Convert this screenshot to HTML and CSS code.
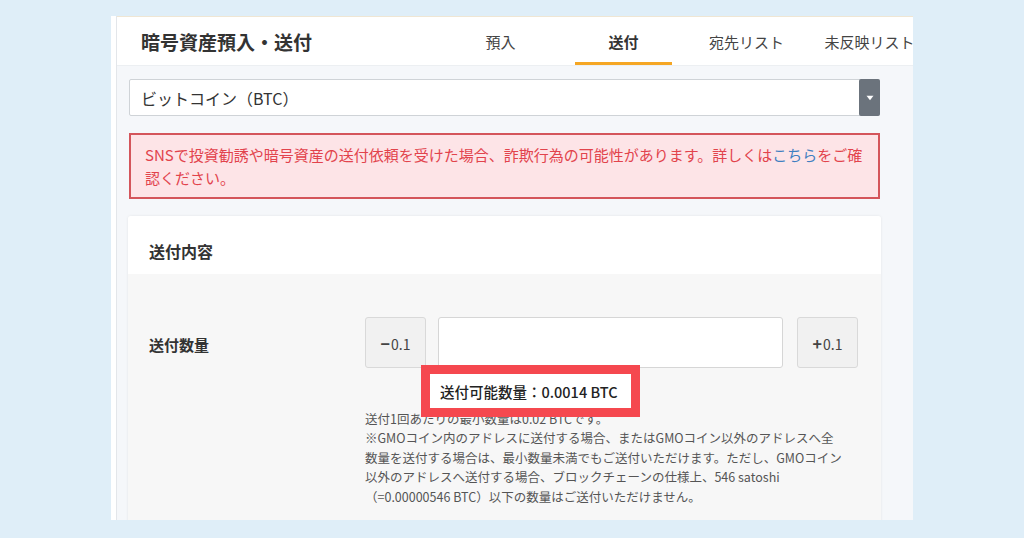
FILE: index.html
```html
<!DOCTYPE html>
<html lang="ja">
<head>
<meta charset="utf-8">
<title>暗号資産預入・送付</title>
<link rel="stylesheet" href="styles.css">
</head>
<body>
<div class="page">
  <div class="panel">
    <div class="inner">
      <header class="header">
        <h1 class="title">暗号資産預入・送付</h1>
        <nav class="tabs">
          <span class="tab">預入</span>
          <span class="tab active">送付</span>
          <span class="tab">宛先リスト</span>
          <span class="tab">未反映リスト</span>
        </nav>
      </header>
      <main class="body">
        <div class="select">
          <span class="select-text">ビットコイン（BTC）</span>
          <span class="select-arrow"><svg width="8" height="6" viewBox="0 0 8 6"><path d="M0.5 0.8h7L4 5.2z" fill="#fff"/></svg></span>
        </div>
        <div class="alert">SNSで投資勧誘や暗号資産の送付依頼を受けた場合、詐欺行為の可能性があります。詳しくは<a class="link">こちら</a>をご確認ください。</div>
        <section class="card">
          <div class="card-head">送付内容</div>
          <div class="card-body">
            <div class="field">
              <div class="label">送付数量</div>
              <div class="controls">
                <div class="stepper">
                  <button class="step"><b class="sign">−</b>0.1</button>
                  <input class="amount" type="text">
                  <button class="step plus"><b class="sign">+</b>0.1</button>
                </div>
                <div class="callout">送付可能数量：0.0014 BTC</div>
                <p class="note">送付1回あたりの最小数量は0.02 BTCです。<br>※GMOコイン内のアドレスに送付する場合、またはGMOコイン以外のアドレスへ全<br>数量を送付する場合は、最小数量未満でもご送付いただけます。ただし、GMOコイン<br>以外のアドレスへ送付する場合、ブロックチェーンの仕様上、546 satoshi<br>（=0.00000546 BTC）以下の数量はご送付いただけません。</p>
              </div>
            </div>
          </div>
        </section>
      </main>
    </div>
  </div>
</div>
</body>
</html>
```
FILE: styles.css
```css
* { box-sizing: border-box; }
html, body { margin: 0; padding: 0; }
body {
  background: #dfeef8;
  font-family: "Noto Sans CJK JP", "Noto Sans", sans-serif;
  color: #333;
  width: 1024px;
  height: 538px;
  overflow: hidden;
}
.page {
  padding: 16px 0 0 111px;
}
.panel {
  width: 802px;
  height: 504px;
  overflow: hidden;
  background: #fff;
  border-left: 5px solid #fff;
}
.inner {
  height: 100%;
  border-left: 1px solid #e3e6ea;
  background: #f5f7fa;
}
.header {
  height: 50px;
  display: flex;
  align-items: stretch;
  background: #fff;
  border-top: 1px solid #efe6d4;
  border-bottom: 1px solid #eceff2;
  padding-left: 24px;
}
.title {
  margin: 0;
  width: 311px;
  flex: 0 0 auto;
  font-size: 19px;
  font-weight: 700;
  color: #333;
  display: flex;
  align-items: center;
  white-space: nowrap;
}
.tabs {
  display: flex;
  gap: 26px;
  white-space: nowrap;
}
.tab {
  width: 97px;
  flex: 0 0 auto;
  display: flex;
  align-items: center;
  justify-content: center;
  font-size: 15px;
  color: #444;
}
.tab.active {
  font-weight: 700;
  color: #333;
  box-shadow: inset 0 -3px 0 #f5a623;
}
.body {
  padding: 13px 33px 0 12px;
}
.select {
  height: 37px;
  display: flex;
  align-items: center;
  background: #fff;
  border: 1px solid #cfd3d7;
  border-radius: 2px;
  padding-left: 11px;
}
.select-text {
  flex: 1;
  font-size: 16px;
  color: #333;
}
.select-arrow {
  width: 21px;
  height: 37px;
  margin-right: -1px;
  background: #6b737c;
  border-radius: 2px;
  display: flex;
  align-items: center;
  justify-content: center;
}
.alert {
  margin-top: 17px;
  height: 66px;
  border: 2px solid #d4555b;
  background: #fde4e7;
  color: #e2434c;
  font-size: 15px;
  line-height: 23px;
  padding: 8px 14px;
}
.link { color: #3f7fc1; }
.card {
  margin: 17px -1px 0 -1px;
  background: #f7f7f7;
  box-shadow: 0 0 3px rgba(0,0,0,0.08);
  border-radius: 3px;
  overflow: hidden;
}
.card-head {
  background: #fff;
  padding: 23px 21px 11px;
  font-size: 16px;
  line-height: 24px;
  font-weight: 700;
  color: #333;
}
.card-body {
  padding: 43px 22px 30px 21px;
}
.field {
  display: grid;
  grid-template-columns: 216px 1fr;
}
.label {
  height: 51px;
  display: flex;
  align-items: center;
  padding-top: 3px;
  font-size: 15px;
  font-weight: 700;
  color: #333;
}
.controls {
  position: relative;
}
.stepper {
  display: flex;
  height: 51px;
}
.step {
  width: 61px;
  height: 51px;
  flex: 0 0 auto;
  background: #f1f1f1;
  border: 1px solid #d9d9d9;
  border-radius: 3px;
  font-family: inherit;
  font-size: 14px;
  color: #444;
  padding: 0;
}
.sign {
  font-size: 16px;
  font-weight: 700;
  margin-right: 1px;
}
.amount {
  width: 345px;
  margin: 0 14px 0 12px;
  height: 51px;
  border: 1px solid #d6d6d6;
  border-radius: 3px;
  background: #fff;
}
.callout {
  position: absolute;
  left: 56px;
  top: 48px;
  width: 219px;
  height: 52px;
  border: 9px solid #f5484f;
  background: #fff;
  font-size: 14.5px;
  font-weight: 500;
  color: #222;
  display: flex;
  align-items: center;
  padding-left: 10px;
  white-space: nowrap;
  z-index: 1;
}
.note {
  margin: 41px 0 0;
  font-size: 12.5px;
  line-height: 19.4px;
  color: #555;
  white-space: nowrap;
}
```
